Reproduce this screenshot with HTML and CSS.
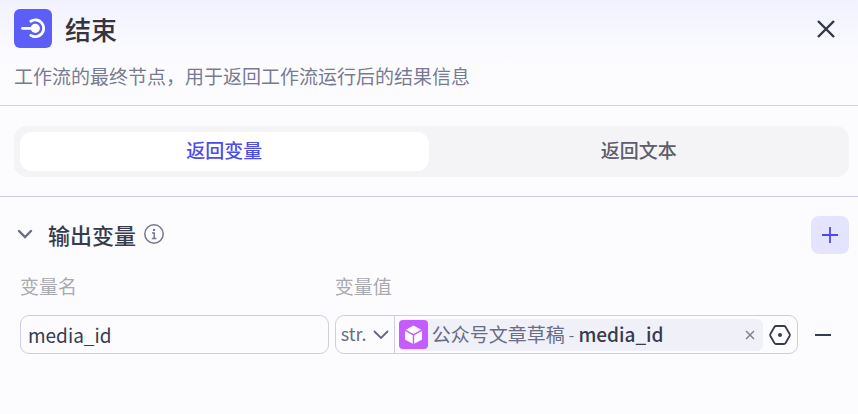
FILE: index.html
```html
<!DOCTYPE html>
<html lang="zh-CN">
<head>
    <meta charset="UTF-8">
    <meta name="viewport" content="width=device-width, initial-scale=1.0">
    <title>结束</title>
    <link rel="stylesheet" href="styles.css">
</head>
<body>

    <header class="header">
        <div class="title-row">
            <svg class="node-icon" viewBox="0 0 38 39" aria-hidden="true">
                <rect width="38" height="39" rx="6" fill="#5b5ff8"/>
                <path d="M16.8 12.2A8.4 8.4 0 1 1 16.8 26.4" fill="none" stroke="#fff" stroke-width="2.8" stroke-linecap="round"/>
                <path d="M8.5 19.3H20" stroke="#fff" stroke-width="2.8" stroke-linecap="round"/>
                <circle cx="21.3" cy="19.3" r="4.6" fill="#fff"/>
            </svg>
            <h1>结束</h1>
            <button type="button" class="icon-button" aria-label="关闭">
                <svg width="20" height="20" viewBox="0 0 20 20">
                    <path d="M2 2L18 18M18 2L2 18" stroke="#323648" stroke-width="2.4"/>
                </svg>
            </button>
        </div>
        <p class="description">工作流的最终节点，用于返回工作流运行后的结果信息</p>
    </header>

    <div class="mode">
        <div class="tabs" role="tablist">
            <button type="button" class="tab active" role="tab" aria-selected="true">返回变量</button>
            <button type="button" class="tab" role="tab" aria-selected="false">返回文本</button>
        </div>
    </div>

    <section class="output">
        <div class="section-head">
            <div class="section-title">
                <button type="button" class="toggle" aria-label="收起">
                    <svg width="16" height="10" viewBox="0 0 16 10">
                        <path d="M2 2L8 8L14 2" fill="none" stroke="#686d87" stroke-width="2.4" stroke-linecap="round"/>
                    </svg>
                </button>
                <h2>输出变量</h2>
                <svg class="info" width="20" height="20" viewBox="0 0 20 20" aria-hidden="true">
                    <circle cx="10" cy="10" r="9.2" fill="none" stroke="#73778f" stroke-width="1.5"/>
                    <circle cx="10" cy="5.9" r="1.2" fill="#73778f"/>
                    <path d="M8 9H10.2V14.4M7.8 14.6H12.4" fill="none" stroke="#73778f" stroke-width="1.5"/>
                </svg>
            </div>
            <button type="button" class="add" aria-label="添加">
                <svg width="16" height="16" viewBox="0 0 16 16">
                    <path d="M8 0V16M0 8H16" stroke="#5046f0" stroke-width="1.8"/>
                </svg>
            </button>
        </div>

        <div class="fields">
            <label class="field-label" for="var-name">变量名</label>
            <label class="field-label" for="var-type">变量值</label>
            <span></span>

            <input type="text" id="var-name" class="box" value="media_id">

            <div class="box value-box">
                <div class="type">
                    <select id="var-type">
                        <option>str.</option>
                        <option>int.</option>
                        <option>bool.</option>
                    </select>
                    <svg class="type-arrow" width="16" height="10" viewBox="0 0 16 10" aria-hidden="true">
                        <path d="M1 1L8 8L15 1" fill="none" stroke="#62677f" stroke-width="1.8"/>
                    </svg>
                </div>
                <div class="reference">
                    <svg class="plugin-icon" viewBox="0 0 29 29" aria-hidden="true">
                        <rect width="29" height="29" rx="4" fill="#c55cff"/>
                        <path d="M14.5 5.6L22.2 9.8L14.5 14L6.8 9.8Z" fill="#fff"/>
                        <path d="M6 11.1L13.8 15.3V23.8L6.7 19.9Q6 19.5 6 18.7Z" fill="#fff"/>
                        <path d="M23 11.1L15.2 15.3V23.8L22.3 19.9Q23 19.5 23 18.7Z" fill="#fff"/>
                    </svg>
                    <span class="source">公众号文章草稿</span>
                    <span class="dash">-</span>
                    <span class="path">media_id</span>
                    <button type="button" class="clear" aria-label="清除">
                        <svg width="10" height="10" viewBox="0 0 10 10">
                            <path d="M1 1L9 9M9 1L1 9" stroke="#80828f" stroke-width="1.5"/>
                        </svg>
                    </button>
                </div>
                <button type="button" class="pick" aria-label="选择变量">
                    <svg width="22" height="20" viewBox="0 0 22 20">
                        <path d="M7 1H15Q16 1 16.6 2L20.6 9Q21.1 10 20.6 11L16.6 18Q16 19 15 19H7Q6 19 5.4 18L1.4 11Q.9 10 1.4 9L5.4 2Q6 1 7 1Z" fill="none" stroke="#373b4e" stroke-width="1.8"/>
                        <circle cx="11" cy="10" r="2" fill="#373b4e"/>
                    </svg>
                </button>
            </div>

            <button type="button" class="icon-button" aria-label="删除">
                <svg width="16" height="2" viewBox="0 0 16 2">
                    <path d="M0 1H16" stroke="#373b4e" stroke-width="2"/>
                </svg>
            </button>
        </div>
    </section>

</body>
</html>
```

FILE: styles.css
```css
* {
    box-sizing: border-box;
}
body {
    margin: 0;
    min-height: 100vh;
    font-family: "Noto Sans CJK SC", sans-serif;
    font-size: 19px;
    line-height: 28px;
    color: #373b4e;
    background: #fcfcff linear-gradient(#f2f2ff, #fcfcff) no-repeat 0 0 / 100% 64px;
}
button, input, select {
    margin: 0;
    padding: 0;
    border: none;
    background: none;
    font: inherit;
    color: inherit;
}
button {
    display: flex;
    align-items: center;
    justify-content: center;
    cursor: pointer;
}
h1, h2, p {
    margin: 0;
}
svg {
    flex: none;
}
.header {
    padding: 9px 13px 15px 14px;
    border-bottom: 1px solid #cfcfe0;
}
.title-row {
    display: flex;
    align-items: center;
}
.node-icon {
    width: 38px;
    height: 39px;
}
h1 {
    flex: 1;
    margin-left: 13px;
    font-size: 26px;
    font-weight: 500;
    line-height: 39px;
    color: #35343f;
}
.icon-button {
    width: 38px;
    height: 38px;
}
.description {
    margin-top: 14px;
    color: #777b92;
}
.mode {
    padding: 20px 9px 19px 14px;
    border-bottom: 1px solid #cdcde3;
}
.tabs {
    display: flex;
    gap: 6px;
    padding: 6px;
    border-radius: 13px;
    background: #f4f4f7;
}
.tab {
    flex: 1;
    height: 39px;
    padding-bottom: 3px;
    border-radius: 12px;
    font-weight: 500;
    color: #5d5d6b;
}
.tab.active {
    background: #fff;
    color: #4d4deb;
}
.output {
    padding: 19px 9px 19px 14px;
}
.section-head {
    display: flex;
    align-items: center;
    justify-content: space-between;
}
.section-title {
    display: flex;
    align-items: center;
    padding-bottom: 3px;
}
.toggle {
    width: 22px;
    height: 22px;
}
h2 {
    margin-left: 12px;
    font-size: 22px;
    font-weight: 500;
}
.info {
    margin-left: 8px;
}
.add {
    width: 38px;
    height: 38px;
    border-radius: 8px;
    background: #e4e4ff;
}
.fields {
    display: grid;
    grid-template-columns: 2fr 3fr 38px;
    column-gap: 6px;
    row-gap: 15px;
    align-items: center;
    padding: 18px 7px 0 6px;
}
.field-label {
    color: #a9aaaf;
}
.box {
    width: 100%;
    min-width: 0;
    height: 39px;
    border: 1px solid #cdcde3;
    border-radius: 9px;
}
input.box {
    padding: 0 7px 1px;
}
.value-box {
    display: flex;
    align-items: center;
}
.type {
    display: grid;
    align-items: center;
    flex: none;
    width: 59px;
    height: 100%;
    border-right: 1px solid #cdcde3;
}
.type select {
    grid-area: 1 / 1;
    width: 100%;
    height: 100%;
    padding: 0 0 3px 5px;
    appearance: none;
    font-size: 18px;
    color: #686d85;
}
.type-arrow {
    grid-area: 1 / 1;
    justify-self: end;
    margin-right: 5px;
    pointer-events: none;
}
.reference {
    display: flex;
    flex: 1;
    align-items: center;
    min-width: 0;
    height: 32px;
    margin-left: 4px;
    border-radius: 6px;
    background: #f0f0f8;
    white-space: nowrap;
}
.plugin-icon {
    width: 29px;
    height: 29px;
}
.source {
    margin-left: 4px;
    color: #686d85;
}
.dash {
    margin: 0 4px;
    font-size: 16px;
    color: #686d85;
}
.source, .dash, .path {
    padding-bottom: 2px;
}
.path {
    font-weight: 500;
}
.clear {
    width: 26px;
    height: 26px;
    margin-left: auto;
}
.pick {
    width: 34px;
    height: 34px;
}
```
